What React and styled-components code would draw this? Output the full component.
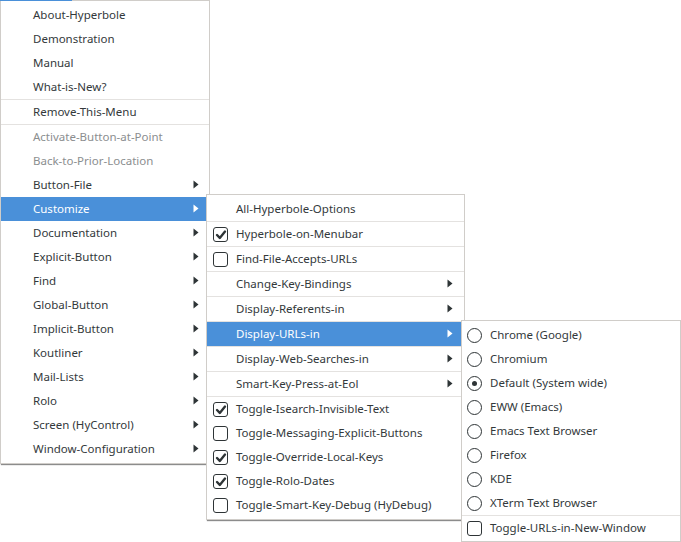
import React from "react";
import styled, { createGlobalStyle, css } from "styled-components";

const GlobalStyle = createGlobalStyle`
  html, body {
    margin: 0;
    padding: 0;
    background: #ffffff;
  }
  body {
    width: 681px;
    height: 542px;
    overflow: hidden;
    font-family: "Noto Sans", "DejaVu Sans", sans-serif;
  }
`;

const mainItems = [
  { label: "About-Hyperbole" },
  { label: "Demonstration" },
  { label: "Manual" },
  { label: "What-is-New?", sep: true },
  { label: "Remove-This-Menu", sep: true },
  { label: "Activate-Button-at-Point", disabled: true },
  { label: "Back-to-Prior-Location", disabled: true },
  { label: "Button-File", sub: true },
  { label: "Customize", sub: true, active: true },
  { label: "Documentation", sub: true },
  { label: "Explicit-Button", sub: true },
  { label: "Find", sub: true },
  { label: "Global-Button", sub: true },
  { label: "Implicit-Button", sub: true },
  { label: "Koutliner", sub: true },
  { label: "Mail-Lists", sub: true },
  { label: "Rolo", sub: true },
  { label: "Screen (HyControl)", sub: true },
  { label: "Window-Configuration", sub: true },
];

const customizeItems = [
  { label: "All-Hyperbole-Options", sep: true },
  { label: "Hyperbole-on-Menubar", check: true, checked: true, sep: true },
  { label: "Find-File-Accepts-URLs", check: true, sep: true },
  { label: "Change-Key-Bindings", sub: true, sep: true },
  { label: "Display-Referents-in", sub: true, sep: true },
  { label: "Display-URLs-in", sub: true, active: true, sep: true },
  { label: "Display-Web-Searches-in", sub: true, sep: true },
  { label: "Smart-Key-Press-at-Eol", sub: true, sep: true },
  { label: "Toggle-Isearch-Invisible-Text", check: true, checked: true },
  { label: "Toggle-Messaging-Explicit-Buttons", check: true },
  { label: "Toggle-Override-Local-Keys", check: true, checked: true },
  { label: "Toggle-Rolo-Dates", check: true, checked: true },
  { label: "Toggle-Smart-Key-Debug (HyDebug)", check: true },
];

const urlItems = [
  { label: "Chrome (Google)", radio: true },
  { label: "Chromium", radio: true },
  { label: "Default (System wide)", radio: true, checked: true },
  { label: "EWW (Emacs)", radio: true },
  { label: "Emacs Text Browser", radio: true },
  { label: "Firefox", radio: true },
  { label: "KDE", radio: true },
  { label: "XTerm Text Browser", radio: true, sep: true },
  { label: "Toggle-URLs-in-New-Window", check: true },
];

function Arrow() {
  return (
    <ArrowIcon width="6" height="9" viewBox="0 0 6 9">
      <path d="M0.5 0.5 L5.5 4.5 L0.5 8.5 Z" />
    </ArrowIcon>
  );
}

function CheckBox({ checked }) {
  return (
    <Box>
      {checked && (
        <svg width="12" height="12" viewBox="0 0 12 12">
          <path
            d="M2 6 L4.8 8.9 L10 2.6"
            fill="none"
            stroke="#2e3436"
            strokeWidth="2.4"
            strokeLinecap="round"
            strokeLinejoin="round"
          />
        </svg>
      )}
    </Box>
  );
}

function Radio({ checked }) {
  return <RadioCircle>{checked && <Dot />}</RadioCircle>;
}

function Menu({ items, indent, arrowRight, markLeft, ...rest }) {
  return (
    <MenuBox {...rest}>
      {items.map((it) => (
        <React.Fragment key={it.label}>
          <Row $active={it.active} $disabled={it.disabled} $indent={indent}>
            {(it.check || it.radio) && (
              <Mark $left={markLeft}>
                {it.check ? <CheckBox checked={it.checked} /> : <Radio checked={it.checked} />}
              </Mark>
            )}
            <Label>{it.label}</Label>
            {it.sub && (
              <ArrowSlot $right={arrowRight}>
                <Arrow />
              </ArrowSlot>
            )}
          </Row>
          {it.sep && <Separator />}
        </React.Fragment>
      ))}
    </MenuBox>
  );
}

export default function App() {
  return (
    <>
      <GlobalStyle />
      <Canvas>
        <MenubarHighlight />
        <Menu
          items={mainItems}
          indent={32}
          arrowRight={10}
          style={{ left: 0, top: 0, width: 210 }}
        />
        <Menu
          items={customizeItems}
          indent={29}
          arrowRight={11}
          markLeft={6}
          style={{ left: 206, top: 194, width: 259 }}
        />
        <Menu
          items={urlItems}
          indent={28}
          markLeft={5}
          style={{ left: 461, top: 320, width: 220, paddingBottom: 1 }}
        />
      </Canvas>
    </>
  );
}

const Canvas = styled.div`
  position: relative;
  width: 681px;
  height: 542px;
`;

const MenubarHighlight = styled.div`
  position: absolute;
  left: 0;
  top: 0;
  width: 72px;
  height: 1px;
  background: #4a90d9;
  z-index: 5;
`;

const MenuBox = styled.div`
  position: absolute;
  box-sizing: border-box;
  display: flex;
  flex-direction: column;
  padding: 2px 0;
  background: #ffffff;
  border: 1px solid #d0cdc9;
  box-shadow: 0 2px 1px -1px rgba(0, 0, 0, 0.45);
`;

const Row = styled.div`
  position: relative;
  display: flex;
  align-items: center;
  height: 24px;
  padding-left: ${(p) => p.$indent}px;
  font-size: 11.5px;
  color: #33393b;

  ${(p) =>
    p.$disabled &&
    css`
      color: #8b8e8f;
    `}

  ${(p) =>
    p.$active &&
    css`
      background: #4a90d9;
      color: #ffffff;
      svg path {
        fill: #ffffff;
      }
    `}
`;

const Label = styled.span`
  white-space: nowrap;
  line-height: 24px;
`;

const Separator = styled.div`
  height: 1px;
  background: #e4e2e0;
`;

const Mark = styled.span`
  position: absolute;
  left: ${(p) => p.$left}px;
  top: 5px;
  display: flex;
`;

const ArrowSlot = styled.span`
  position: absolute;
  right: ${(p) => p.$right}px;
  top: 7px;
  display: flex;
`;

const ArrowIcon = styled.svg`
  path {
    fill: #2e3436;
  }
`;

const Box = styled.span`
  box-sizing: border-box;
  display: flex;
  align-items: center;
  justify-content: center;
  width: 15px;
  height: 15px;
  border: 1px solid #2e3436;
  border-radius: 3px;
  background: #ffffff;
`;

const RadioCircle = styled.span`
  box-sizing: border-box;
  display: flex;
  align-items: center;
  justify-content: center;
  width: 15px;
  height: 15px;
  border: 1px solid #2e3436;
  border-radius: 50%;
  background: #ffffff;
`;

const Dot = styled.span`
  width: 5px;
  height: 5px;
  border-radius: 50%;
  background: #2e3436;
`;
